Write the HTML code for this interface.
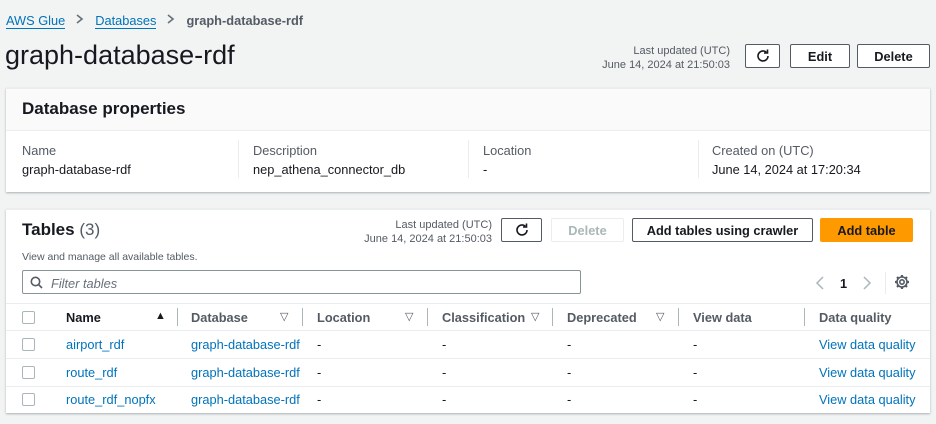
<!DOCTYPE html>
<html><head><style>
*{box-sizing:border-box;margin:0;padding:0}
body{width:936px;height:424px;background:#f2f3f3;font-family:"Liberation Sans",Arial,sans-serif;color:#16191f;position:relative;overflow:hidden;font-size:12.8px}
.a{position:absolute;white-space:nowrap}
.lnk{color:#0073bb}
.btn{position:absolute;border:1px solid #545b64;border-radius:2px;background:#fff;font-weight:bold;color:#16191f;display:flex;align-items:center;justify-content:center;font-size:12.8px}
.panel{position:absolute;background:#fff;box-shadow:0 1px 2px rgba(0,28,36,.3);border-top:1px solid #eaeded}
.sm{font-size:11px;color:#545b64;text-align:right}
.cb{position:absolute;width:13px;height:13px;border:1.5px solid #aab7b8;border-radius:2px;background:#fff}
.div{position:absolute;width:1px;background:#aab7b8}
.th{position:absolute;font-weight:bold;color:#545b64;top:310px}
.tri{position:absolute;font-size:11px;color:#545b64;top:310px}
.hl{position:absolute;left:6px;width:924px;height:1px;background:#eaeded}
</style></head><body>
<div class="a" style="left:6px;top:13px"><span class="lnk" style="border-bottom:1px solid #0073bb">AWS Glue</span><svg width="30" height="12" viewBox="0 0 30 12"><path d="M12 2l5 4-5 4" fill="none" stroke="#687078" stroke-width="1.6"/></svg><span class="lnk" style="border-bottom:1px solid #0073bb">Databases</span><svg width="30" height="12" viewBox="0 0 30 12"><path d="M12 2l5 4-5 4" fill="none" stroke="#687078" stroke-width="1.6"/></svg><span style="color:#545b64;font-weight:bold">graph-database-rdf</span></div>
<div class="a" style="left:5px;top:40px;font-size:27px">graph-database-rdf</div>
<div class="a sm" style="right:206px;top:44px;line-height:14px">Last updated (UTC)<br>June 14, 2024 at 21:50:03</div>
<div class="btn" style="left:745px;top:44px;width:35px;height:24px"><svg width="16" height="16" viewBox="0 0 16 16"><path d="M13 8a5 5 0 1 1-1.6-3.7" fill="none" stroke="#16191f" stroke-width="1.6"/><path d="M12.5 1.5v3.5H9" fill="none" stroke="#16191f" stroke-width="1.6"/></svg></div>
<div class="btn" style="left:790px;top:44px;width:60px;height:24px">Edit</div>
<div class="btn" style="left:857px;top:44px;width:73px;height:24px">Delete</div>

<div class="panel" style="left:6px;top:88px;width:924px;height:104px">
<div style="height:42px;background:#fafafa;border-bottom:1px solid #eaeded;padding:10px 16px;font-size:17px;font-weight:bold">Database properties</div>
</div>
<div class="a" style="left:22px;top:143px;color:#545b64">Name</div>
<div class="a" style="left:22px;top:162px">graph-database-rdf</div>
<div class="div" style="left:238px;top:140px;height:38px;background:#eaeded"></div>
<div class="a" style="left:253px;top:143px;color:#545b64">Description</div>
<div class="a" style="left:253px;top:162px">nep_athena_connector_db</div>
<div class="div" style="left:468px;top:140px;height:38px;background:#eaeded"></div>
<div class="a" style="left:483px;top:143px;color:#545b64">Location</div>
<div class="a" style="left:483px;top:162px">-</div>
<div class="div" style="left:698px;top:140px;height:38px;background:#eaeded"></div>
<div class="a" style="left:712px;top:143px;color:#545b64">Created on (UTC)</div>
<div class="a" style="left:712px;top:162px">June 14, 2024 at 17:20:34</div>

<div class="panel" style="left:6px;top:209px;width:924px;height:204px"></div>
<div class="a" style="left:22px;top:220px;font-size:17px;font-weight:bold">Tables <span style="font-weight:normal;color:#545b64">(3)</span></div>
<div class="a" style="left:22px;top:251px;font-size:10.5px;color:#545b64">View and manage all available tables.</div>
<div class="a sm" style="right:444px;top:218px;line-height:14px">Last updated (UTC)<br>June 14, 2024 at 21:50:03</div>
<div class="btn" style="left:501px;top:218px;width:41px;height:24px"><svg width="16" height="16" viewBox="0 0 16 16"><path d="M13 8a5 5 0 1 1-1.6-3.7" fill="none" stroke="#16191f" stroke-width="1.6"/><path d="M12.5 1.5v3.5H9" fill="none" stroke="#16191f" stroke-width="1.6"/></svg></div>
<div class="btn" style="left:551px;top:218px;width:73px;height:24px;border-color:#eaeded;color:#aab7b8">Delete</div>
<div class="btn" style="left:632px;top:218px;width:181px;height:24px">Add tables using crawler</div>
<div class="btn" style="left:820px;top:218px;width:93px;height:24px;background:#ff9900;border-color:#ff9900">Add table</div>
<div class="a" style="left:22px;top:270px;width:559px;height:24px;border:1px solid #879596;border-radius:2px;background:#fff"></div>
<svg class="a" style="left:30px;top:276px" width="13" height="13" viewBox="0 0 13 13"><circle cx="5.5" cy="5.5" r="4.2" fill="none" stroke="#545b64" stroke-width="1.6"/><path d="M8.5 8.5L12 12" stroke="#545b64" stroke-width="1.6"/></svg>
<div class="a" style="left:51px;top:276px;font-style:italic;color:#687078">Filter tables</div>
<svg class="a" style="left:814px;top:275px" width="12" height="16" viewBox="0 0 12 16"><path d="M9 2L3 8l6 6" fill="none" stroke="#aab7b8" stroke-width="1.5"/></svg>
<div class="a" style="left:840px;top:276px;font-weight:bold">1</div>
<svg class="a" style="left:861px;top:275px" width="12" height="16" viewBox="0 0 12 16"><path d="M3 2l6 6-6 6" fill="none" stroke="#aab7b8" stroke-width="1.5"/></svg>
<div class="div" style="left:885px;top:272px;height:22px;background:#eaeded"></div>
<svg class="a" style="left:894px;top:274px" width="16" height="16" viewBox="0 0 16 16"><circle cx="8" cy="8" r="2.2" fill="none" stroke="#545b64" stroke-width="1.6"/><circle cx="8" cy="8" r="5" fill="none" stroke="#545b64" stroke-width="1.6"/><g stroke="#545b64" stroke-width="2.2"><path d="M8 1v2M8 13v2M1 8h2M13 8h2M3 3l1.4 1.4M11.6 11.6L13 13M3 13l1.4-1.4M11.6 4.4L13 3"/></g></svg>
<div class="hl" style="top:303px"></div>
<div class="cb" style="left:22px;top:311px"></div>
<div class="th" style="left:66px;color:#16191f">Name</div><div class="tri" style="left:155px;color:#16191f">&#9650;</div>
<div class="div" style="left:177px;top:308px;height:18px"></div>
<div class="th" style="left:191px">Database</div><div class="tri" style="left:280px">&#9661;</div>
<div class="div" style="left:302px;top:308px;height:18px"></div>
<div class="th" style="left:317px">Location</div><div class="tri" style="left:405px">&#9661;</div>
<div class="div" style="left:427px;top:308px;height:18px"></div>
<div class="th" style="left:442px">Classification</div><div class="tri" style="left:531px">&#9661;</div>
<div class="div" style="left:552px;top:308px;height:18px"></div>
<div class="th" style="left:567px">Deprecated</div><div class="tri" style="left:656px">&#9661;</div>
<div class="div" style="left:678px;top:308px;height:18px"></div>
<div class="th" style="left:693px">View data</div>
<div class="div" style="left:804px;top:308px;height:18px"></div>
<div class="th" style="left:819px">Data quality</div>
<div class="hl" style="top:330px"></div>
<div class="cb" style="left:22px;top:338px"></div><div class="a lnk" style="left:66px;top:337px">airport_rdf</div><div class="a lnk" style="left:191px;top:337px">graph-database-rdf</div><div class="a" style="left:317px;top:337px">-</div><div class="a" style="left:442px;top:337px">-</div><div class="a" style="left:567px;top:337px">-</div><div class="a" style="left:693px;top:337px">-</div><div class="a lnk" style="left:819px;top:337px">View data quality</div>
<div class="hl" style="top:358px"></div>
<div class="cb" style="left:22px;top:366px"></div><div class="a lnk" style="left:66px;top:365px">route_rdf</div><div class="a lnk" style="left:191px;top:365px">graph-database-rdf</div><div class="a" style="left:317px;top:365px">-</div><div class="a" style="left:442px;top:365px">-</div><div class="a" style="left:567px;top:365px">-</div><div class="a" style="left:693px;top:365px">-</div><div class="a lnk" style="left:819px;top:365px">View data quality</div>
<div class="hl" style="top:386px"></div>
<div class="cb" style="left:22px;top:393px"></div><div class="a lnk" style="left:66px;top:392px">route_rdf_nopfx</div><div class="a lnk" style="left:191px;top:392px">graph-database-rdf</div><div class="a" style="left:317px;top:392px">-</div><div class="a" style="left:442px;top:392px">-</div><div class="a" style="left:567px;top:392px">-</div><div class="a" style="left:693px;top:392px">-</div><div class="a lnk" style="left:819px;top:392px">View data quality</div>
</body></html>
